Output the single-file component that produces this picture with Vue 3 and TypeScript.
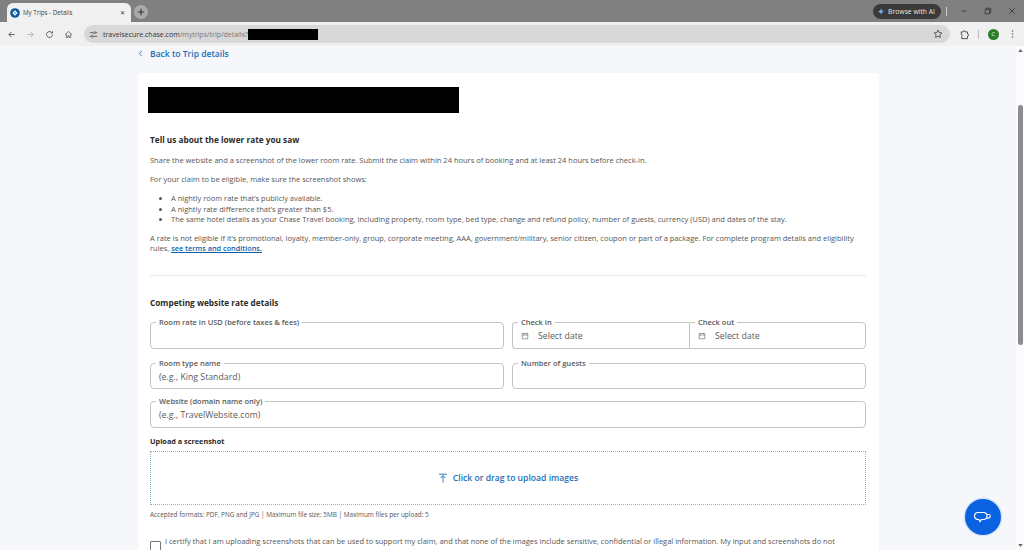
<script setup lang="ts">
const bullets: string[] = [
  'A nightly room rate that’s publicly available.',
  'A nightly rate difference that’s greater than $5.',
  'The same hotel details as your Chase Travel booking, including property, room type, bed type, change and refund policy, number of guests, currency (USD) and dates of the stay.',
]
</script>

<template>
  <div class="window">
    <div class="tabstrip">
      <div class="tab">
        <svg class="favicon" viewBox="0 0 12 12" width="10" height="10"><circle cx="6" cy="6" r="5.800" fill="#0f5a9e"/><path d="M6 2.800L9.200 6 6 9.200 2.800 6z" fill="#fff"/><circle cx="6" cy="6" r="1" fill="#0f5a9e"/></svg>
        <span class="tab-title">My Trips - Details</span>
        <span class="tab-close">✕</span>
      </div>
      <div class="newtab">
        <svg viewBox="0 0 10 10" width="8" height="8"><path d="M5 1v8M1 5h8" stroke="#333" stroke-width="1.400"/></svg>
      </div>
      <div class="strip-spacer"></div>
      <div class="ai-pill">
        <svg viewBox="0 0 10 10" width="7" height="7"><path d="M5 0l1.600 3.400L10 5 6.600 6.600 5 10 3.400 6.600 0 5l3.400-1.600z" fill="#6fb0ee"/></svg>
        <span>Browse with AI</span>
      </div>
      <div class="strip-sep"></div>
      <div class="win-controls">
        <svg viewBox="0 0 10 10" width="8" height="8"><path d="M2 5h6" stroke="#333" stroke-width="1"/></svg>
        <svg viewBox="0 0 10 10" width="8" height="8"><path d="M1.500 3h5.500v5.500H1.500zM3 3V1.500h5.500V7H7" fill="none" stroke="#333" stroke-width="1"/></svg>
        <svg viewBox="0 0 10 10" width="8" height="8"><path d="M1.500 1.500l7 7M8.500 1.500l-7 7" stroke="#333" stroke-width="1"/></svg>
      </div>
    </div>

    <div class="toolbar">
      <div class="nav">
        <svg viewBox="0 0 12 12" width="9" height="9"><path d="M10 6H2.500M6 2.500L2.500 6 6 9.500" fill="none" stroke="#555" stroke-width="1.200"/></svg>
        <svg viewBox="0 0 12 12" width="9" height="9"><path d="M2 6h7.500M6 2.500L9.500 6 6 9.500" fill="none" stroke="#b0b0b0" stroke-width="1.200"/></svg>
        <svg viewBox="0 0 12 12" width="9" height="9"><path d="M10 6a4 4 0 1 1-1.200-2.800M10 1.500v2.500H7.500" fill="none" stroke="#555" stroke-width="1.200"/></svg>
        <svg viewBox="0 0 12 12" width="9" height="9"><path d="M1.500 6L6 2l4.500 4M3 5v5h2.200V7.500h1.600V10H9V5" fill="none" stroke="#555" stroke-width="1"/></svg>
      </div>
      <div class="omnibox">
        <svg class="tune" viewBox="0 0 12 12" width="9" height="9"><path d="M1 3.500h5M9 3.500h2M1 8.500h2M6 8.500h5" stroke="#444" stroke-width="1"/><circle cx="7.500" cy="3.500" r="1.300" fill="none" stroke="#444"/><circle cx="4.500" cy="8.500" r="1.300" fill="none" stroke="#444"/></svg>
        <span class="url"><b>travelsecure.chase.com</b>/mytrips/trip/details?</span>
        <span class="url-redact"></span>
        <span class="omni-spacer"></span>
        <svg viewBox="0 0 12 12" width="10" height="10"><path d="M6 1.300l1.400 3 3.300.4-2.400 2.200.6 3.300L6 8.600l-2.900 1.600.6-3.300-2.400-2.200 3.300-.4z" fill="none" stroke="#444" stroke-width="1"/></svg>
      </div>
      <div class="tools">
        <svg viewBox="0 0 12 12" width="11" height="11"><path d="M2.500 3.200h2a1.200 1.200 0 0 1 2.400 0h2.300v2.200a1.200 1.200 0 0 1 0 2.400v2.700H3V8a1.100 1.100 0 0 0-.5-2.100z" fill="none" stroke="#444" stroke-width="1"/></svg>
        <span class="tool-sep"></span>
        <span class="avatar">C</span>
        <svg viewBox="0 0 4 12" width="3" height="10"><circle cx="2" cy="2" r="1" fill="#555"/><circle cx="2" cy="6" r="1" fill="#555"/><circle cx="2" cy="10" r="1" fill="#555"/></svg>
      </div>
    </div>

    <div class="viewport">
      <main class="page">
        <a class="back"><svg viewBox="0 0 6 8" width="5" height="7"><path d="M4.500 1L1.500 4l3 3" fill="none" stroke="#1a6fb8" stroke-width="1"/></svg><span>Back to Trip details</span></a>
        <section class="card">
          <div class="redact-title"></div>
          <h2 class="h-tell">Tell us about the lower rate you saw</h2>
          <p class="p-share">Share the website and a screenshot of the lower room rate. Submit the claim within 24 hours of booking and at least 24 hours before check-in.</p>
          <p class="p-elig">For your claim to be eligible, make sure the screenshot shows:</p>
          <ul>
            <li v-for="b in bullets" :key="b">{{ b }}</li>
          </ul>
          <p class="p-rate">A rate is not eligible if it’s promotional, loyalty, member-only, group, corporate meeting, AAA, government/military, senior citizen, coupon or part of a package. For complete program details and eligibility rules, <a class="terms">see terms and conditions.</a></p>
          <hr />
          <h2 class="h-comp">Competing website rate details</h2>

          <div class="row first">
            <fieldset class="field"><legend>Room rate in USD (before taxes &amp; fees)</legend></fieldset>
            <div class="dates">
              <fieldset class="field date"><legend>Check in</legend>
                <svg viewBox="0 0 10 10" width="8" height="8"><path d="M1.500 2h7v6.500h-7zM1.500 3.800h7M3 1v1.500M7 1v1.500" fill="none" stroke="#666" stroke-width=".8"/></svg>
                <span>Select date</span>
              </fieldset>
              <fieldset class="field date out"><legend>Check out</legend>
                <svg viewBox="0 0 10 10" width="8" height="8"><path d="M1.500 2h7v6.500h-7zM1.500 3.800h7M3 1v1.500M7 1v1.500" fill="none" stroke="#666" stroke-width=".8"/></svg>
                <span>Select date</span>
              </fieldset>
            </div>
          </div>
          <div class="row">
            <fieldset class="field"><legend>Room type name</legend><span>(e.g., King Standard)</span></fieldset>
            <fieldset class="field"><legend>Number of guests</legend></fieldset>
          </div>
          <div class="row single">
            <fieldset class="field"><legend>Website (domain name only)</legend><span>(e.g., TravelWebsite.com)</span></fieldset>
          </div>

          <h3 class="h-upload">Upload a screenshot</h3>
          <div class="drop">
            <svg viewBox="0 0 10 10" width="10" height="10"><path d="M1 1.200h8M5 9.500V2.500M2.500 5L5 2.500 7.500 5" fill="none" stroke="#1a6fb8" stroke-width=".9"/></svg>
            <span>Click or drag to upload images</span>
          </div>
          <p class="formats">Accepted formats: PDF, PNG and JPG | Maximum file size: 5MB | Maximum files per upload: 5</p>
          <div class="certify">
            <span class="checkbox"></span>
            <p>I certify that I am uploading screenshots that can be used to support my claim, and that none of the images include sensitive, confidential or illegal information. My input and screenshots do not</p>
          </div>
        </section>
      </main>
      <div class="scrollbar">
        <svg viewBox="0 0 6 4" width="5" height="3"><path d="M3 0l3 4H0z" fill="#666"/></svg>
        <div class="thumb-track"><div class="thumb"></div></div>
        <svg viewBox="0 0 6 4" width="5" height="3"><path d="M0 0h6L3 4z" fill="#666"/></svg>
      </div>
      <button class="chat" aria-label="Chat">
        <svg viewBox="0 0 20 14" width="20" height="14"><path d="M5 2.500h5.500a3.500 3.500 0 0 1 0 7H8.500L7 11.500 6 9.500H5a3.500 3.500 0 0 1 0-7z" fill="none" stroke="#fff" stroke-width="1.200"/><path d="M14 4.500h1.500a1.800 1.800 0 0 1 0 3.600H14" fill="none" stroke="#fff" stroke-width="1.200"/></svg>
      </button>
    </div>
  </div>
</template>

<style>
html, body { margin: 0; height: 100%; overflow: hidden; }
</style>

<style scoped>
.window { width: 1024px; height: 550px; display: flex; flex-direction: column; overflow: hidden; font-family: "Open Sans", "Noto Sans", sans-serif; color: #444; }

.tabstrip { height: 22px; background: #808080; display: flex; align-items: flex-end; padding-left: 7px; flex: none; }
.tab { width: 124px; height: 19px; background: #f1f1f1; border-radius: 6px 6px 0 0; display: flex; align-items: center; padding: 0 5px 0 3px; box-sizing: border-box; gap: 3px; }
.tab-title { font-size: 6.200px; color: #444; flex: 1; }
.tab-close { font-size: 6px; color: #333; margin-right: 1px; }
.newtab { width: 14px; height: 14px; border-radius: 50%; background: #aaa; display: flex; align-items: center; justify-content: center; margin: 0 0 3px 3px; }
.strip-spacer { flex: 1; }
.ai-pill { height: 15px; border-radius: 8px; background: #3a3a3a; color: #e6e6e6; font-size: 6.800px; display: flex; align-items: center; gap: 4px; padding: 0 6px 0 5px; margin-bottom: 3px; box-sizing: border-box; width: 68px; white-space: nowrap; }
.strip-sep { width: 1px; height: 9px; background: #d0d0d0; margin: 0 0 6px 5px; }
.win-controls { width: 77px; display: flex; justify-content: space-between; align-items: center; height: 22px; padding: 0 8px 0 13px; box-sizing: border-box; }

.toolbar { height: 24px; background: #f0f0f0; display: flex; align-items: center; flex: none; }
.nav { display: flex; gap: 10px; padding-left: 7px; width: 84px; box-sizing: border-box; align-items: center; }
.omnibox { width: 866px; height: 18px; border-radius: 9px; background: #d8d8d8; display: flex; align-items: center; padding: 0 7px 0 5px; box-sizing: border-box; }
.tune { margin-right: 5px; }
.url { font-size: 7px; color: #777; }
.url b { font-weight: 400; color: #333; }
.url-redact { width: 70px; height: 11px; background: #000; }
.omni-spacer { flex: 1; }
.tools { flex: 1; display: flex; align-items: center; padding-left: 9px; }
.tool-sep { width: 1px; height: 9px; background: #bbb; margin: 0 9px 0 8px; }
.avatar { width: 11px; height: 11px; border-radius: 50%; background: #2a7d2a; color: #e8f5e8; font-size: 6px; display: flex; align-items: center; justify-content: center; margin-right: 12px; }

.viewport { flex: 1; display: flex; background: #f5f7fa; position: relative; min-height: 0; }
.page { flex: 1; padding: 0 137px 0 138px; min-width: 0; }
.back { display: flex; align-items: center; gap: 7px; height: 15px; color: #1a6fb8; font-size: 8.550px; font-weight: 600; }
.card { margin-top: 12px; background: #fff; border-radius: 4px; padding: 14px 13px 0 12px; height: 480px; box-sizing: border-box; box-shadow: 0 0 2px rgba(0,0,0,.04); }
.redact-title { width: 311px; height: 26px; background: #000; margin-left: -2px; }

h2, h3, p, ul { margin: 0; }
h2, h3 { color: #2b2b2b; font-weight: 700; }
.h-tell { font-size: 8.250px; line-height: 12px; margin-top: 21px; }
p, li { font-size: 7.500px; line-height: 10.500px; color: #555; }
.p-share { margin-top: 9px; }
.p-elig { margin-top: 8px; }
ul { padding-left: 21px; margin-top: 9px; }
.p-rate { margin-top: 8px; }
.terms { color: #0f5ea8; font-weight: 600; font-size: 7.300px; text-decoration: underline; }
hr { border: none; border-top: 1px solid #e8e8e8; margin: 21px 0 0; }
.h-comp { font-size: 8.250px; line-height: 12px; margin-top: 21px; }

.row { display: grid; grid-template-columns: 354px 354px; gap: 8px; margin-top: 10px; }
.row.first { margin-top: 9.500px; }
.row.single { grid-template-columns: 1fr; margin-top: 8px; }
.dates { display: flex; }
.field { margin: 0; min-width: 0; height: 30.500px; box-sizing: border-box; border: 1px solid #c4c4c4; border-radius: 4px; padding: 0 8px; display: flex; align-items: center; font-size: 8.750px; color: #5a5a5a; }
.field legend { font-size: 7.500px; font-weight: 600; color: #5a5a5a; padding: 0 3px; margin-left: -3px; line-height: 9px; }
.field > span { position: relative; top: -1px; }
.date { flex: 0 0 177px; gap: 9px; border-radius: 4px 0 0 4px; border-right: none; }
.date.out { border-radius: 0 4px 4px 0; border-right: 1px solid #c4c4c4; border-left: 1px solid #c4c4c4; }
.date svg { position: relative; top: -1px; }

.h-upload { font-size: 7.300px; line-height: 10px; margin-top: 8px; }
.drop { height: 54px; margin-top: 5px; border: 1px dotted #8fb4c8; box-sizing: border-box; display: flex; align-items: center; justify-content: center; gap: 5px; color: #1a6fb8; font-size: 8.600px; font-weight: 600; }
.formats { font-size: 6.420px; line-height: 9px; margin-top: 5px; color: #555; }
.certify { display: flex; gap: 4px; margin-top: 17px; align-items: flex-start; }
.checkbox { width: 11px; height: 11px; box-sizing: border-box; border: 1px solid #777; border-radius: 1px; flex: none; margin-top: 5px; }
.certify p { white-space: nowrap; font-size: 7.480px; }

.scrollbar { width: 8px; flex: none; background: #fbfbfb; display: flex; flex-direction: column; align-items: center; padding: 3px 0; box-sizing: border-box; }
.thumb-track { flex: 1; width: 100%; padding-top: 53px; box-sizing: border-box; display: flex; justify-content: center; }
.thumb { width: 5px; height: 240px; background: #8c8c8c; border-radius: 3px; }

.chat { position: absolute; left: 965px; top: 453px; width: 36px; height: 36px; border-radius: 50%; background: #0a62e0; border: none; padding: 0; display: flex; align-items: center; justify-content: center; box-shadow: 0 0 0 1.500px rgba(10,98,224,.12); }
</style>
